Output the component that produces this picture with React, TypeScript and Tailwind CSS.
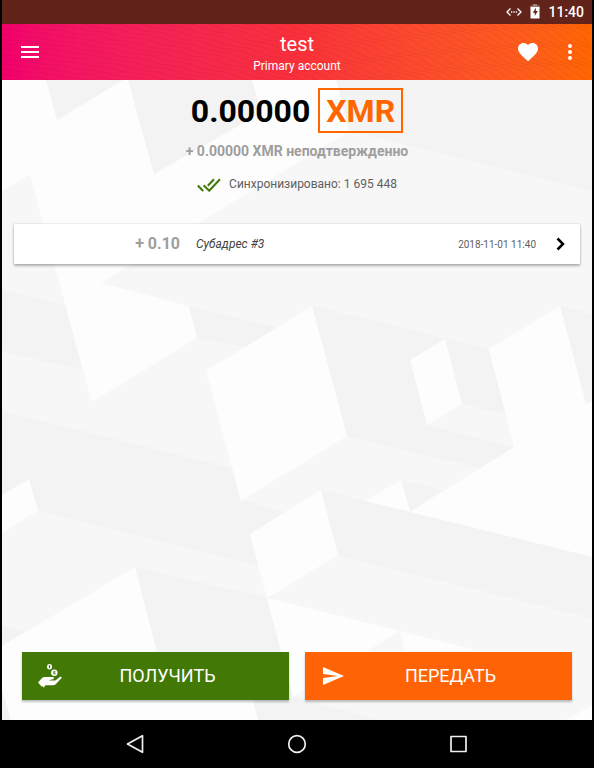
import React from "react";

const LIGHT = "#fdfdfd";
const SHADE = "#f3f3f3";
const MID = "#f7f7f7";

const facets: Array<[string, string]> = [
  [SHADE, "336,80 592,80 592,191 349,131"],
  [LIGHT, "2,80 336,80 349,131 101,283 189,306 197,338 92,402 30,175 2,191"],
  [SHADE, "46,80 123,80 57,120"],
  [SHADE, "128,80 252,80 261,113 154,174"],
  [SHADE, "2,290 65,305 82,370 2,351"],
  [SHADE, "189,306 276,327 248,347 197,338"],
  [SHADE, "2,411 232,468 242,500 284,512 250,534 259,566 38,511 2,533"],
  [LIGHT, "2,495 29,479 38,511 2,533"],
  [SHADE, "312,306 489,349 514,447 481,468 347,436"],
  [LIGHT, "312,306 347,436 241,501 206,371"],
  [MID, "462,404 506,414 514,447 427,425"],
  [LIGHT, "445,339 462,404 427,425 410,360"],
  [SHADE, "560,306 592,314 592,401 586,404"],
  [LIGHT, "489,349 560,306 586,404 592,401 592,557 410,512 514,447"],
  [SHADE, "401,480 442,490 410,512"],
  [LIGHT, "401,480 410,512 365,501"],
  [SHADE, "321,490 592,557 592,618 338,555"],
  [LIGHT, "321,490 338,555 267,598 250,534"],
  [SHADE, "135,567 267,598 293,697 382,720 135,720"],
  [LIGHT, "267,598 479,651 400,651 400,631 293,697"],
  [MID, "400,631 406,655 361,655"],
  [SHADE, "2,625 26,631 2,646"],
  [SHADE, "2,690 11,720 2,720"],
  [LIGHT, "2,646 135,567 163,675 248,680 258,720 11,720 2,690"],
  [LIGHT, "592,705 592,720 566,720"],
];

function Backdrop() {
  return (
    <svg
      className="absolute inset-0 h-full w-full"
      viewBox="2 80 590 640"
      preserveAspectRatio="none"
      aria-hidden="true"
    >
      {facets.map(([fill, points]) => (
        <polygon key={points} fill={fill} points={points} />
      ))}
    </svg>
  );
}

function wave(row: number) {
  let d = "";
  for (let x = 0; x <= 590; x += 3) {
    const slope = 0.1 + (x / 590) * 0.2;
    const ripple = Math.sin(x / 6 + row * 1.7) * (0.5 + x / 450);
    const y = row * 5 - 190 + x * slope + ripple;
    d += `${x === 0 ? "M" : "L"}${x} ${y.toFixed(1)}`;
  }
  return d;
}

function HeaderTexture() {
  return (
    <svg
      className="absolute inset-0 h-full w-full"
      viewBox="0 0 590 56"
      preserveAspectRatio="none"
      aria-hidden="true"
    >
      <g fill="none" stroke="#7a1030" strokeOpacity="0.09" strokeWidth="1">
        {Array.from({ length: 52 }, (_, row) => (
          <path key={row} d={wave(row)} />
        ))}
      </g>
    </svg>
  );
}

function StatusBar() {
  return (
    <div className="flex h-6 items-center justify-end bg-[#62231a] pr-2 text-white">
      <svg width="16" height="10" viewBox="0 0 16 10" fill="none" stroke="currentColor" strokeWidth="1.3" aria-hidden="true">
        <path d="M4.500 1.500 1 5l3.500 3.500M11.500 1.500 15 5l-3.500 3.500" />
        <path d="M5 5h1.300M7.400 5h1.300M9.800 5h1.300" />
      </svg>
      <svg className="ml-2" width="10" height="16" viewBox="0 0 10 16" aria-hidden="true">
        <path fill="#a57b75" d="M3 0h4v1.500h2.500V5h-9V1.500H3z" />
        <path fill="#fff" d="M.5 3h9v11.500h-9z" />
        <path fill="#62231a" d="M6 3.500 2.800 8.700h2V12l3-5H5.700z" />
      </svg>
      <time className="ml-2 text-sm font-medium">11:40</time>
    </div>
  );
}

function AppBar() {
  return (
    <header className="relative h-14 bg-linear-to-r from-[#f2006c] via-[#f9303a] to-[#ff6600]">
      <HeaderTexture />
      <div className="relative flex h-full items-center text-white">
        <button type="button" aria-label="Меню" className="flex h-14 w-14 items-center justify-center">
          <svg width="24" height="24" viewBox="0 0 24 24" fill="currentColor" aria-hidden="true">
            <path d="M3 18h18v-2H3v2zm0-5h18v-2H3v2zm0-7v2h18V6H3z" />
          </svg>
        </button>
        <div className="flex-1 pt-1 pl-7 text-center">
          <h1 className="text-xl leading-6">test</h1>
          <p className="text-xs leading-5">Primary account</p>
        </div>
        <button type="button" aria-label="Поддержать" className="flex h-14 w-10 items-center justify-center">
          <svg width="24" height="24" viewBox="0 0 24 24" fill="currentColor" aria-hidden="true">
            <path d="M12 21.350l-1.450-1.320C5.400 15.360 2 12.280 2 8.500 2 5.420 4.420 3 7.500 3c1.740 0 3.410.81 4.500 2.090C13.090 3.810 14.760 3 16.500 3 19.580 3 22 5.420 22 8.500c0 3.780-3.400 6.860-8.550 11.540L12 21.350z" />
          </svg>
        </button>
        <button type="button" aria-label="Ещё" className="flex h-14 w-11 items-center justify-center">
          <svg width="24" height="24" viewBox="0 0 24 24" fill="currentColor" aria-hidden="true">
            <circle cx="12" cy="6" r="2" />
            <circle cx="12" cy="12" r="2" />
            <circle cx="12" cy="18" r="2" />
          </svg>
        </button>
      </div>
    </header>
  );
}

function Balance() {
  return (
    <section className="flex flex-col items-center pt-2">
      <div className="flex items-center gap-2 text-[32px] leading-10 font-bold">
        <span className="text-black">0.00000</span>
        <button type="button" className="h-[45px] border-2 border-[#ff6600] px-1.5 text-[#ff6600]">
          XMR
        </button>
      </div>
      <p className="mt-2 text-sm font-bold text-[#9e9e9e]">+ 0.00000 XMR неподтвержденно</p>
      <p className="mt-3 flex h-[22px] items-center gap-2 text-xs text-[#606060]">
        <svg width="24" height="16" viewBox="0 0 24 16" fill="none" stroke="#3f7808" strokeWidth="2" aria-hidden="true">
          <path d="M.8 9.500 6.200 15M6.600 9.200 12.200 14.700 23 3.300M17 3.300 10.800 9.700" />
        </svg>
        Синхронизировано: 1 695 448
      </p>
    </section>
  );
}

function Transactions() {
  return (
    <ul className="mx-3 mt-[29px]">
      <li>
        <button
          type="button"
          className="flex h-10 w-full items-center rounded-[1px] bg-white pr-2 text-left shadow-[0_2px_3px_rgba(0,0,0,0.28),0_0_2px_rgba(0,0,0,0.2)]"
        >
          <span className="w-[166px] text-right text-base font-bold text-[#9e9e9e]">+ 0.10</span>
          <span className="ml-4 flex-1 text-xs italic text-[#424242]">Субадрес #3</span>
          <time className="text-[10px] text-[#616161]">2018-11-01 11:40</time>
          <svg className="ml-3" width="24" height="24" viewBox="0 0 24 24" fill="none" stroke="#000" strokeWidth="2.500" aria-hidden="true">
            <path d="m9.500 6.500 5.500 5.500-5.500 5.500" />
          </svg>
        </button>
      </li>
    </ul>
  );
}

function HandCoinsIcon() {
  return (
    <svg width="24" height="24" viewBox="0 0 24 24" aria-hidden="true">
      <ellipse cx="11.500" cy="2.700" rx="2.500" ry="2.700" fill="#fff" />
      <circle cx="16.300" cy="8.700" r="3.200" fill="#fff" />
      <g fill="none" stroke="#427806">
        <path d="M11.500 1.200v3" strokeWidth="1.300" />
        <path d="M17.400 7.600h-1.800v1.200h1.500v1.200h-1.800" strokeWidth=".8" />
      </g>
      <path
        fill="#fff"
        d="M0 18.500 4.300 13.800c.8-.7 1.600-.9 2.700-.9h7.600c1.600 0 1.900 1.900.4 2.300l-3.500.7v.7h4.800c.7 0 1.200-.3 1.700-.7l3.800-2.900c1-.7 2.500.2 1.600 1.200l-5.500 5.800c-.8.8-1.500 1.200-2.600 1.200H7.400l-1.600 2.500L4.600 22l-.8.700z"
      />
    </svg>
  );
}

function SendIcon() {
  return (
    <svg width="24" height="24" viewBox="0 0 24 24" fill="#fff" aria-hidden="true">
      <path d="M2 21 23 12 2 3v7l15 2-15 2z" />
    </svg>
  );
}

function Actions() {
  const shared =
    "flex h-12 flex-1 items-center px-4 text-lg text-white shadow-[0_2px_2px_rgba(0,0,0,0.25)]";
  return (
    <div className="mt-auto flex gap-4 p-5">
      <button type="button" className={`${shared} bg-[#427806]`}>
        <HandCoinsIcon />
        <span className="flex-1 text-center">ПОЛУЧИТЬ</span>
      </button>
      <button type="button" className={`${shared} bg-[#ff6305]`}>
        <SendIcon />
        <span className="flex-1 text-center">ПЕРЕДАТЬ</span>
      </button>
    </div>
  );
}

function SystemNav() {
  const key = "flex h-12 flex-1 items-center justify-center";
  return (
    <nav className="flex bg-black px-[54px] text-[#f0f0f0]">
      <button type="button" aria-label="Назад" className={key}>
        <svg width="20" height="20" viewBox="0 0 20 20" fill="none" stroke="currentColor" strokeWidth="1.700" strokeLinejoin="round" aria-hidden="true">
          <path d="M16.500 1.700v16.600L1.500 10z" />
        </svg>
      </button>
      <button type="button" aria-label="Домой" className={key}>
        <svg width="20" height="20" viewBox="0 0 20 20" fill="none" stroke="currentColor" strokeWidth="1.700" aria-hidden="true">
          <circle cx="10" cy="10" r="8.300" />
        </svg>
      </button>
      <button type="button" aria-label="Недавние" className={key}>
        <svg width="20" height="20" viewBox="0 0 20 20" fill="none" stroke="currentColor" strokeWidth="1.700" strokeLinejoin="round" aria-hidden="true">
          <path d="M3 2.500h15v15H3z" />
        </svg>
      </button>
    </nav>
  );
}

export default function App() {
  return (
    <div className="flex min-h-screen flex-col bg-black px-0.5 font-['Roboto',sans-serif]">
      <StatusBar />
      <AppBar />
      <main className="relative flex flex-1 flex-col bg-[#f7f7f7]">
        <Backdrop />
        <div className="relative flex flex-1 flex-col">
          <Balance />
          <Transactions />
          <Actions />
        </div>
      </main>
      <SystemNav />
    </div>
  );
}
